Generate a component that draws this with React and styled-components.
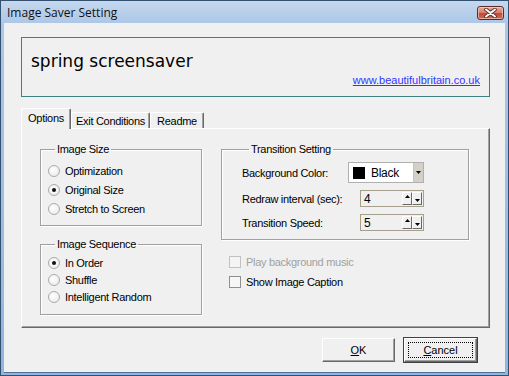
import styled, { createGlobalStyle } from "styled-components";

const GlobalStyle = createGlobalStyle`
  html, body { margin: 0; padding: 0; background: #f0f0f0; }
  body {
    font-family: "Liberation Sans", Arial, sans-serif;
    font-size: 11px;
    letter-spacing: -0.3px;
    color: #000;
  }
  * { box-sizing: border-box; }
`;

const Window = styled.div`
  width: 509px;
  height: 376px;
  display: flex;
  flex-direction: column;
  border: 1px solid #33516f;
  background: linear-gradient(#c4d8ef, #adc7e6 22px, #8fb6df);
  padding: 0 3px 3px 3px;
`;

const TitleBar = styled.div`
  height: 22px;
  flex: none;
  display: flex;
  align-items: center;
  justify-content: space-between;
  padding: 0 1px 0 3px;
`;

const Title = styled.span`
  font-family: "Open Sans", "Noto Sans", sans-serif;
  font-size: 12px;
  letter-spacing: 0;
  color: #111;
`;

const CloseButton = styled.div`
  width: 27px;
  height: 14px;
  margin-top: 1px;
  border: 1px solid #5a2a2a;
  border-radius: 3px;
  background: linear-gradient(#e9a99b, #d77b66 50%, #c24a33 52%, #d06a4e);
  box-shadow: inset 0 0 0 1px rgba(255, 220, 210, 0.6);
  display: flex;
  align-items: center;
  justify-content: center;
`;

const Client = styled.div`
  flex: 1;
  background: #f0f0f0;
  display: flex;
  flex-direction: column;
  padding: 14px 15px 0 17px;
  box-shadow: 0 1px 0 #4d6f95;
`;

const Header = styled.div`
  height: 60px;
  border: 1px solid #3f8080;
  padding: 13px 9px 0 9px;
  display: flex;
  flex-direction: column;
  letter-spacing: 0;
`;

const Heading = styled.div`
  font-family: "Comic Sans MS", "DejaVu Sans", sans-serif;
  font-size: 17px;
  line-height: 20px;
  color: #000;
`;

const SiteLink = styled.a`
  align-self: flex-end;
  margin-top: 3px;
  line-height: 13px;
  color: #3333ff;
  text-decoration: underline;
`;

const TabStrip = styled.div`
  margin-top: 11px;
  height: 20px;
  display: flex;
  align-items: flex-end;
`;

const Tab = styled.div`
  width: ${(p) => p.$w}px;
  height: ${(p) => (p.$active ? 21 : 16)}px;
  margin-bottom: ${(p) => (p.$active ? -1 : 0)}px;
  position: relative;
  z-index: ${(p) => (p.$active ? 1 : 0)};
  background: #f0f0f0;
  border-top: 1px solid #fff;
  border-left: 1px solid #fff;
  border-right: 1px solid #696969;
  border-radius: 2px 2px 0 0;
  box-shadow: inset -1px 0 0 #a0a0a0;
  display: flex;
  align-items: ${(p) => (p.$active ? "flex-start" : "center")};
  padding-top: ${(p) => (p.$active ? 3 : 0)}px;
  justify-content: center;
`;

const Panel = styled.div`
  height: 200px;
  border-top: 1px solid #fff;
  border-left: 1px solid #fff;
  border-right: 1px solid #696969;
  border-bottom: 1px solid #696969;
  box-shadow: inset -1px -1px 0 #a0a0a0;
  padding: 14px 0 0 18px;
  display: flex;
  gap: 19px;
`;

const Column = styled.div`
  display: flex;
  flex-direction: column;
  gap: ${(p) => p.$gap || 0}px;
`;

const Group = styled.fieldset`
  margin: 0;
  width: ${(p) => p.$w}px;
  border: 1px solid #a0a0a0;
  box-shadow: inset 1px 1px 0 #fff, 1px 1px 0 #fff;
  padding: ${(p) => p.$pad};
  display: flex;
  flex-direction: column;
`;

const Legend = styled.legend`
  margin-left: 7px;
  padding: 0 2px;
  line-height: 13px;
`;

const OptionRow = styled.label`
  height: ${(p) => p.$h}px;
  display: flex;
  align-items: center;
  gap: 5px;
  white-space: nowrap;
  color: ${(p) => (p.$disabled ? "#a0a0a0" : "#000")};
`;

const RadioMark = styled.span`
  width: 12px;
  height: 12px;
  border-radius: 50%;
  border: 1px solid #aaa;
  background: radial-gradient(circle at 40% 40%, #fff, #e6e6e6);
  display: flex;
  align-items: center;
  justify-content: center;
  &::after {
    content: "";
    width: 4px;
    height: 4px;
    border-radius: 50%;
    background: ${(p) => (p.$checked ? "#111" : "transparent")};
  }
`;

const CheckMark = styled.span`
  width: 12px;
  height: 12px;
  border: 1px solid ${(p) => (p.$disabled ? "#c2c2c2" : "#8e8f8f")};
  background: ${(p) => (p.$disabled ? "#f4f4f4" : "#f6f6f6")};
`;

const SettingGrid = styled.div`
  display: grid;
  grid-template-columns: auto 1fr;
  grid-template-rows: 21px 17px 17px;
  row-gap: 7px;
  align-items: center;
  justify-items: end;
`;

const SettingLabel = styled.span`
  justify-self: start;
  white-space: nowrap;
`;

const Combo = styled.div`
  width: 76px;
  height: 21px;
  border: 1px solid #b0b0b0;
  background: #fff;
  display: flex;
  align-items: center;
  padding-left: 4px;
  gap: 6px;
`;

const Swatch = styled.span`
  width: 12px;
  height: 12px;
  background: #000;
`;

const ComboText = styled.span`
  flex: 1;
  font-size: 12px;
`;

const DropButton = styled.span`
  width: 10px;
  height: 19px;
  background: #d4d0c8;
  border-left: 1px solid #c8c4bc;
  display: flex;
  align-items: center;
  justify-content: center;
`;

const Spin = styled.div`
  width: 64px;
  height: 17px;
  border: 1px solid #a59f8e;
  display: flex;
  align-items: center;
  padding: 0 1px 0 3px;
`;

const SpinValue = styled.span`
  flex: 1;
  font-size: 12px;
`;

const SpinButton = styled.span`
  width: 10px;
  height: 13px;
  border-top: 1px solid #fff;
  border-left: 1px solid #fff;
  border-right: 1px solid #696969;
  border-bottom: 1px solid #696969;
  background: #f0f0f0;
  display: flex;
  justify-content: center;
  align-items: ${(p) => (p.$up ? "flex-start" : "flex-end")};
  padding: 2px 0;
`;

const CheckList = styled.div`
  margin-top: 12px;
  padding-left: 8px;
  display: flex;
  flex-direction: column;
`;

const ButtonRow = styled.div`
  margin-top: 10px;
  padding-right: 13px;
  display: flex;
  justify-content: flex-end;
  gap: 9px;
`;

const Button = styled.button`
  width: 73px;
  height: 24px;
  font-family: "Liberation Sans", Arial, sans-serif;
  font-size: 11px;
  color: #000;
  background: #f0f0f0;
  border-top: 1px solid #fff;
  border-left: 1px solid #fff;
  border-right: 1px solid #696969;
  border-bottom: 1px solid #696969;
  box-shadow: ${(p) =>
    p.$default
      ? "0 0 0 1px #404040, inset -1px -1px 0 #a0a0a0"
      : "inset -1px -1px 0 #a0a0a0"};
  padding: 3px;
  display: flex;
  align-items: stretch;
`;

const FocusRing = styled.span`
  flex: 1;
  border: 1px ${(p) => (p.$on ? "dotted #000" : "solid transparent")};
  display: flex;
  align-items: center;
  justify-content: center;
`;

const Arrow = ({ down }) => (
  <svg width="5" height="3" viewBox="0 0 5 3">
    <path d={down ? "M0 0h5L2.5 3z" : "M0 3h5L2.5 0z"} fill="#000" />
  </svg>
);

const Radio = ({ checked, h, children }) => (
  <OptionRow $h={h}>
    <RadioMark $checked={checked} />
    {children}
  </OptionRow>
);

const SpinBox = ({ value }) => (
  <Spin>
    <SpinValue>{value}</SpinValue>
    <SpinButton $up>
      <Arrow />
    </SpinButton>
    <SpinButton>
      <Arrow down />
    </SpinButton>
  </Spin>
);

export default function App() {
  return (
    <>
      <GlobalStyle />
      <Window>
        <TitleBar>
          <Title>Image Saver Setting</Title>
          <CloseButton>
            <svg width="13" height="10" viewBox="0 0 13 10">
              <path d="M2 1.5l9 7M11 1.5l-9 7" stroke="#5a2a2a" strokeWidth="3.6" strokeLinecap="round" />
              <path d="M2 1.5l9 7M11 1.5l-9 7" stroke="#fff" strokeWidth="2" strokeLinecap="round" />
            </svg>
          </CloseButton>
        </TitleBar>
        <Client>
          <Header>
            <Heading>spring screensaver</Heading>
            <SiteLink>www.beautifulbritain.co.uk</SiteLink>
          </Header>
          <TabStrip>
            <Tab $active $w={50}>Options</Tab>
            <Tab $w={79}>Exit Conditions</Tab>
            <Tab $w={54}>Readme</Tab>
          </TabStrip>
          <Panel>
            <Column $gap={12}>
              <Group $w={162} $pad="5px 0 7px 7px">
                <Legend>Image Size</Legend>
                <Radio h={19}>Optimization</Radio>
                <Radio h={19} checked>Original Size</Radio>
                <Radio h={19}>Stretch to Screen</Radio>
              </Group>
              <Group $w={162} $pad="3px 0 9px 7px">
                <Legend>Image Sequence</Legend>
                <Radio h={17} checked>In Order</Radio>
                <Radio h={17}>Shuffle</Radio>
                <Radio h={17}>Intelligent Random</Radio>
              </Group>
            </Column>
            <Column>
              <Group $w={248} $pad="6px 44px 8px 20px">
                <Legend>Transition Setting</Legend>
                <SettingGrid>
                  <SettingLabel>Background Color:</SettingLabel>
                  <Combo>
                    <Swatch />
                    <ComboText>Black</ComboText>
                    <DropButton>
                      <Arrow down />
                    </DropButton>
                  </Combo>
                  <SettingLabel>Redraw interval (sec):</SettingLabel>
                  <SpinBox value="4" />
                  <SettingLabel>Transition Speed:</SettingLabel>
                  <SpinBox value="5" />
                </SettingGrid>
              </Group>
              <CheckList>
                <OptionRow $h={20} $disabled>
                  <CheckMark $disabled />
                  Play background music
                </OptionRow>
                <OptionRow $h={20}>
                  <CheckMark />
                  Show Image Caption
                </OptionRow>
              </CheckList>
            </Column>
          </Panel>
          <ButtonRow>
            <Button>
              <FocusRing>
                <u>O</u>K
              </FocusRing>
            </Button>
            <Button $default>
              <FocusRing $on>
                <u>C</u>ancel
              </FocusRing>
            </Button>
          </ButtonRow>
        </Client>
      </Window>
    </>
  );
}
